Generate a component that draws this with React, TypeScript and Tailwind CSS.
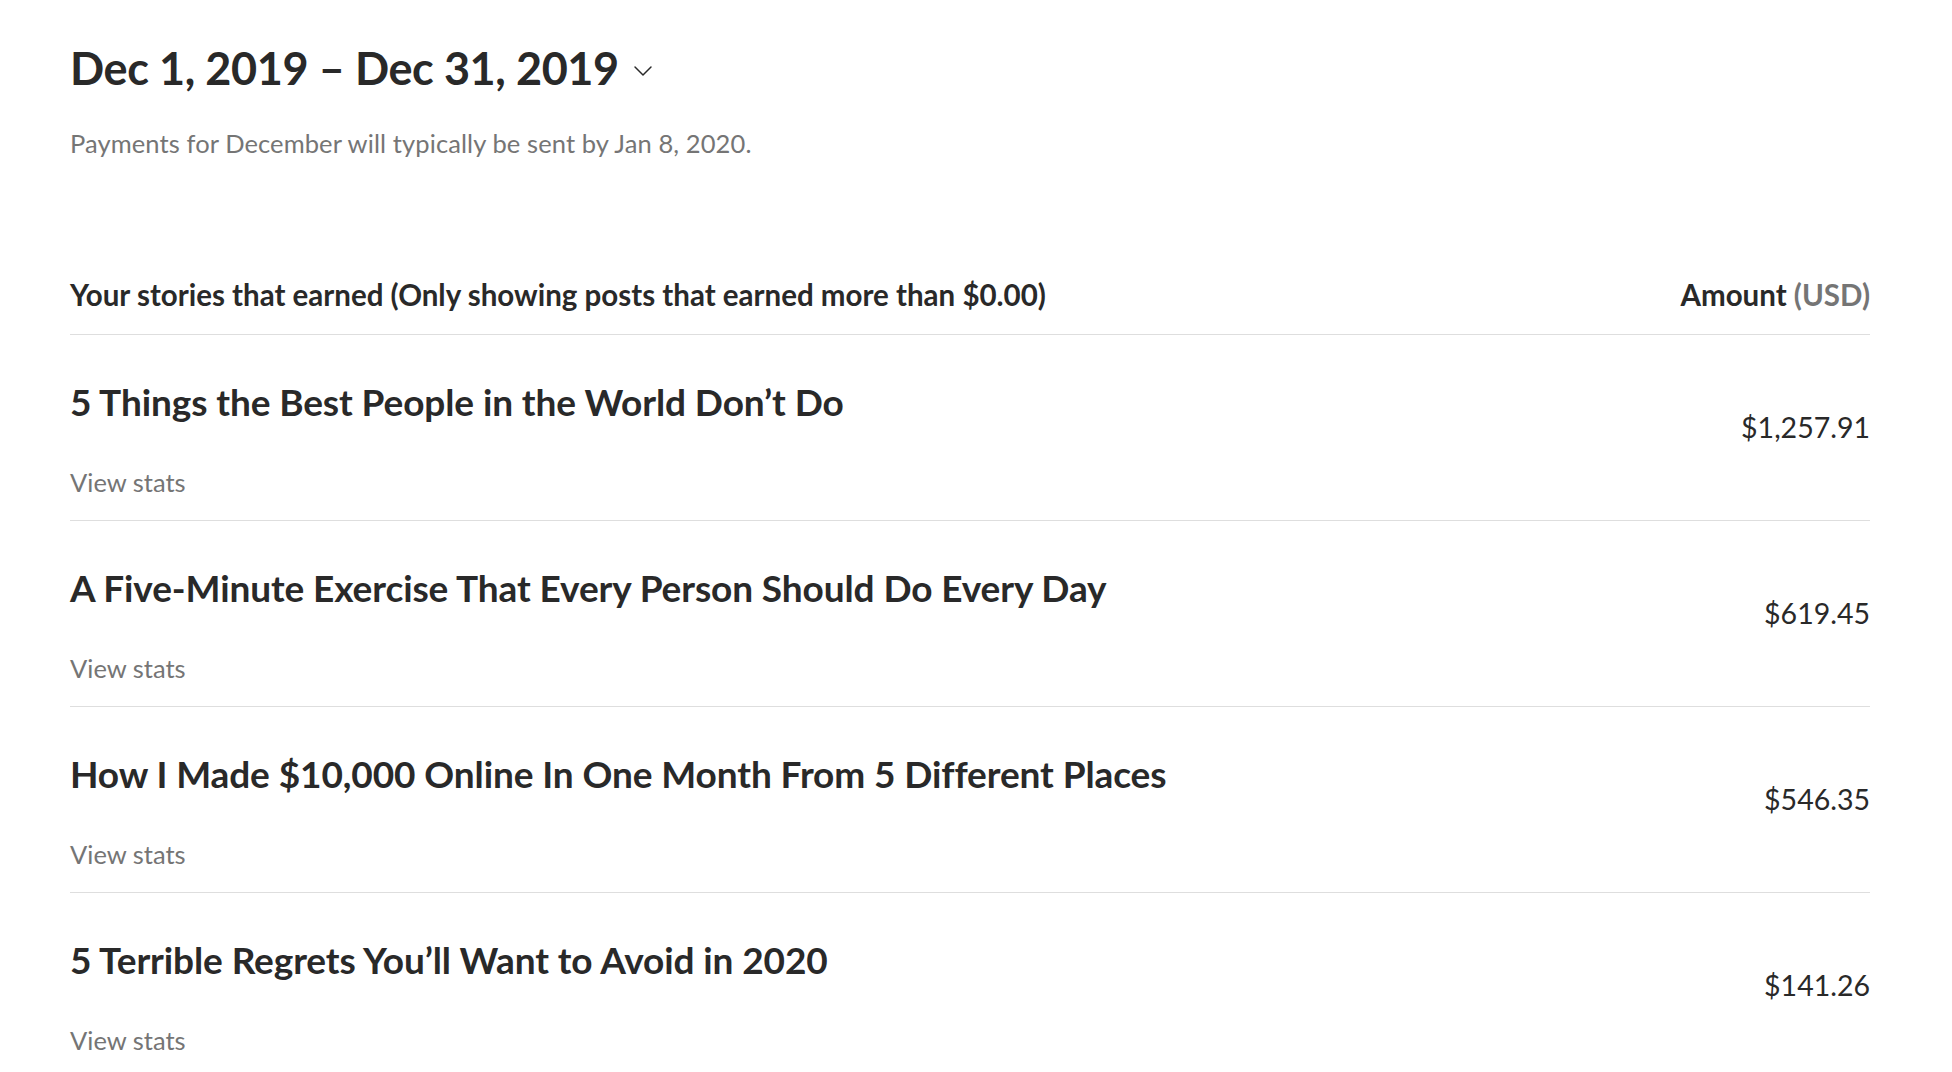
import { ChevronDown } from 'lucide-react'

const STORIES = [
  { title: '5 Things the Best People in the World Don’t Do', amount: '$1,257.91' },
  { title: 'A Five-Minute Exercise That Every Person Should Do Every Day', amount: '$619.45' },
  { title: 'How I Made $10,000 Online In One Month From 5 Different Places', amount: '$546.35' },
  { title: '5 Terrible Regrets You’ll Want to Avoid in 2020', amount: '$141.26' },
]

const SANS = "font-['Lato','Noto_Sans',sans-serif]"

export default function App() {
  return (
    <div className={`min-h-screen bg-white text-[#292929] ${SANS}`}>
      <div className="pl-[70px] pr-[82px] pt-[40px]">
        <div className="flex items-center gap-[8px]">
          <h1 className="text-[45px] leading-[56px] font-bold tracking-[-0.4px]">
            Dec 1, 2019 – Dec 31, 2019
          </h1>
          <ChevronDown className="w-[32px] h-[32px] mt-[6px] text-[#292929]" strokeWidth={1.1} />
        </div>
        <p className="mt-[32px] text-[25.5px] leading-[30px] tracking-[0.1px] text-[#757575]">
          Payments for December will typically be sent by Jan 8, 2020.
        </p>

        <div className="mt-[120px] flex items-end justify-between border-b border-[#dedede] pb-[22px]">
          <span className="text-[29.5px] leading-[34px] font-bold">
            Your stories that earned (Only showing posts that earned more than $0.00)
          </span>
          <span className="text-[29.5px] leading-[34px] font-bold">
            Amount <span className="text-[#757575]">(USD)</span>
          </span>
        </div>

        {STORIES.map((s) => (
          <div key={s.title} className="flex justify-between border-b border-[#dedede] h-[186px]">
            <div className="flex flex-col pt-[45px]">
              <span className="text-[37px] leading-[44px] font-bold tracking-[-0.1px]">{s.title}</span>
              <span className="mt-[43px] text-[25.5px] leading-[30px] text-[#757575]">View stats</span>
            </div>
            <span className="pt-[74px] text-[28.5px] leading-[36px]">{s.amount}</span>
          </div>
        ))}
      </div>
    </div>
  )
}
